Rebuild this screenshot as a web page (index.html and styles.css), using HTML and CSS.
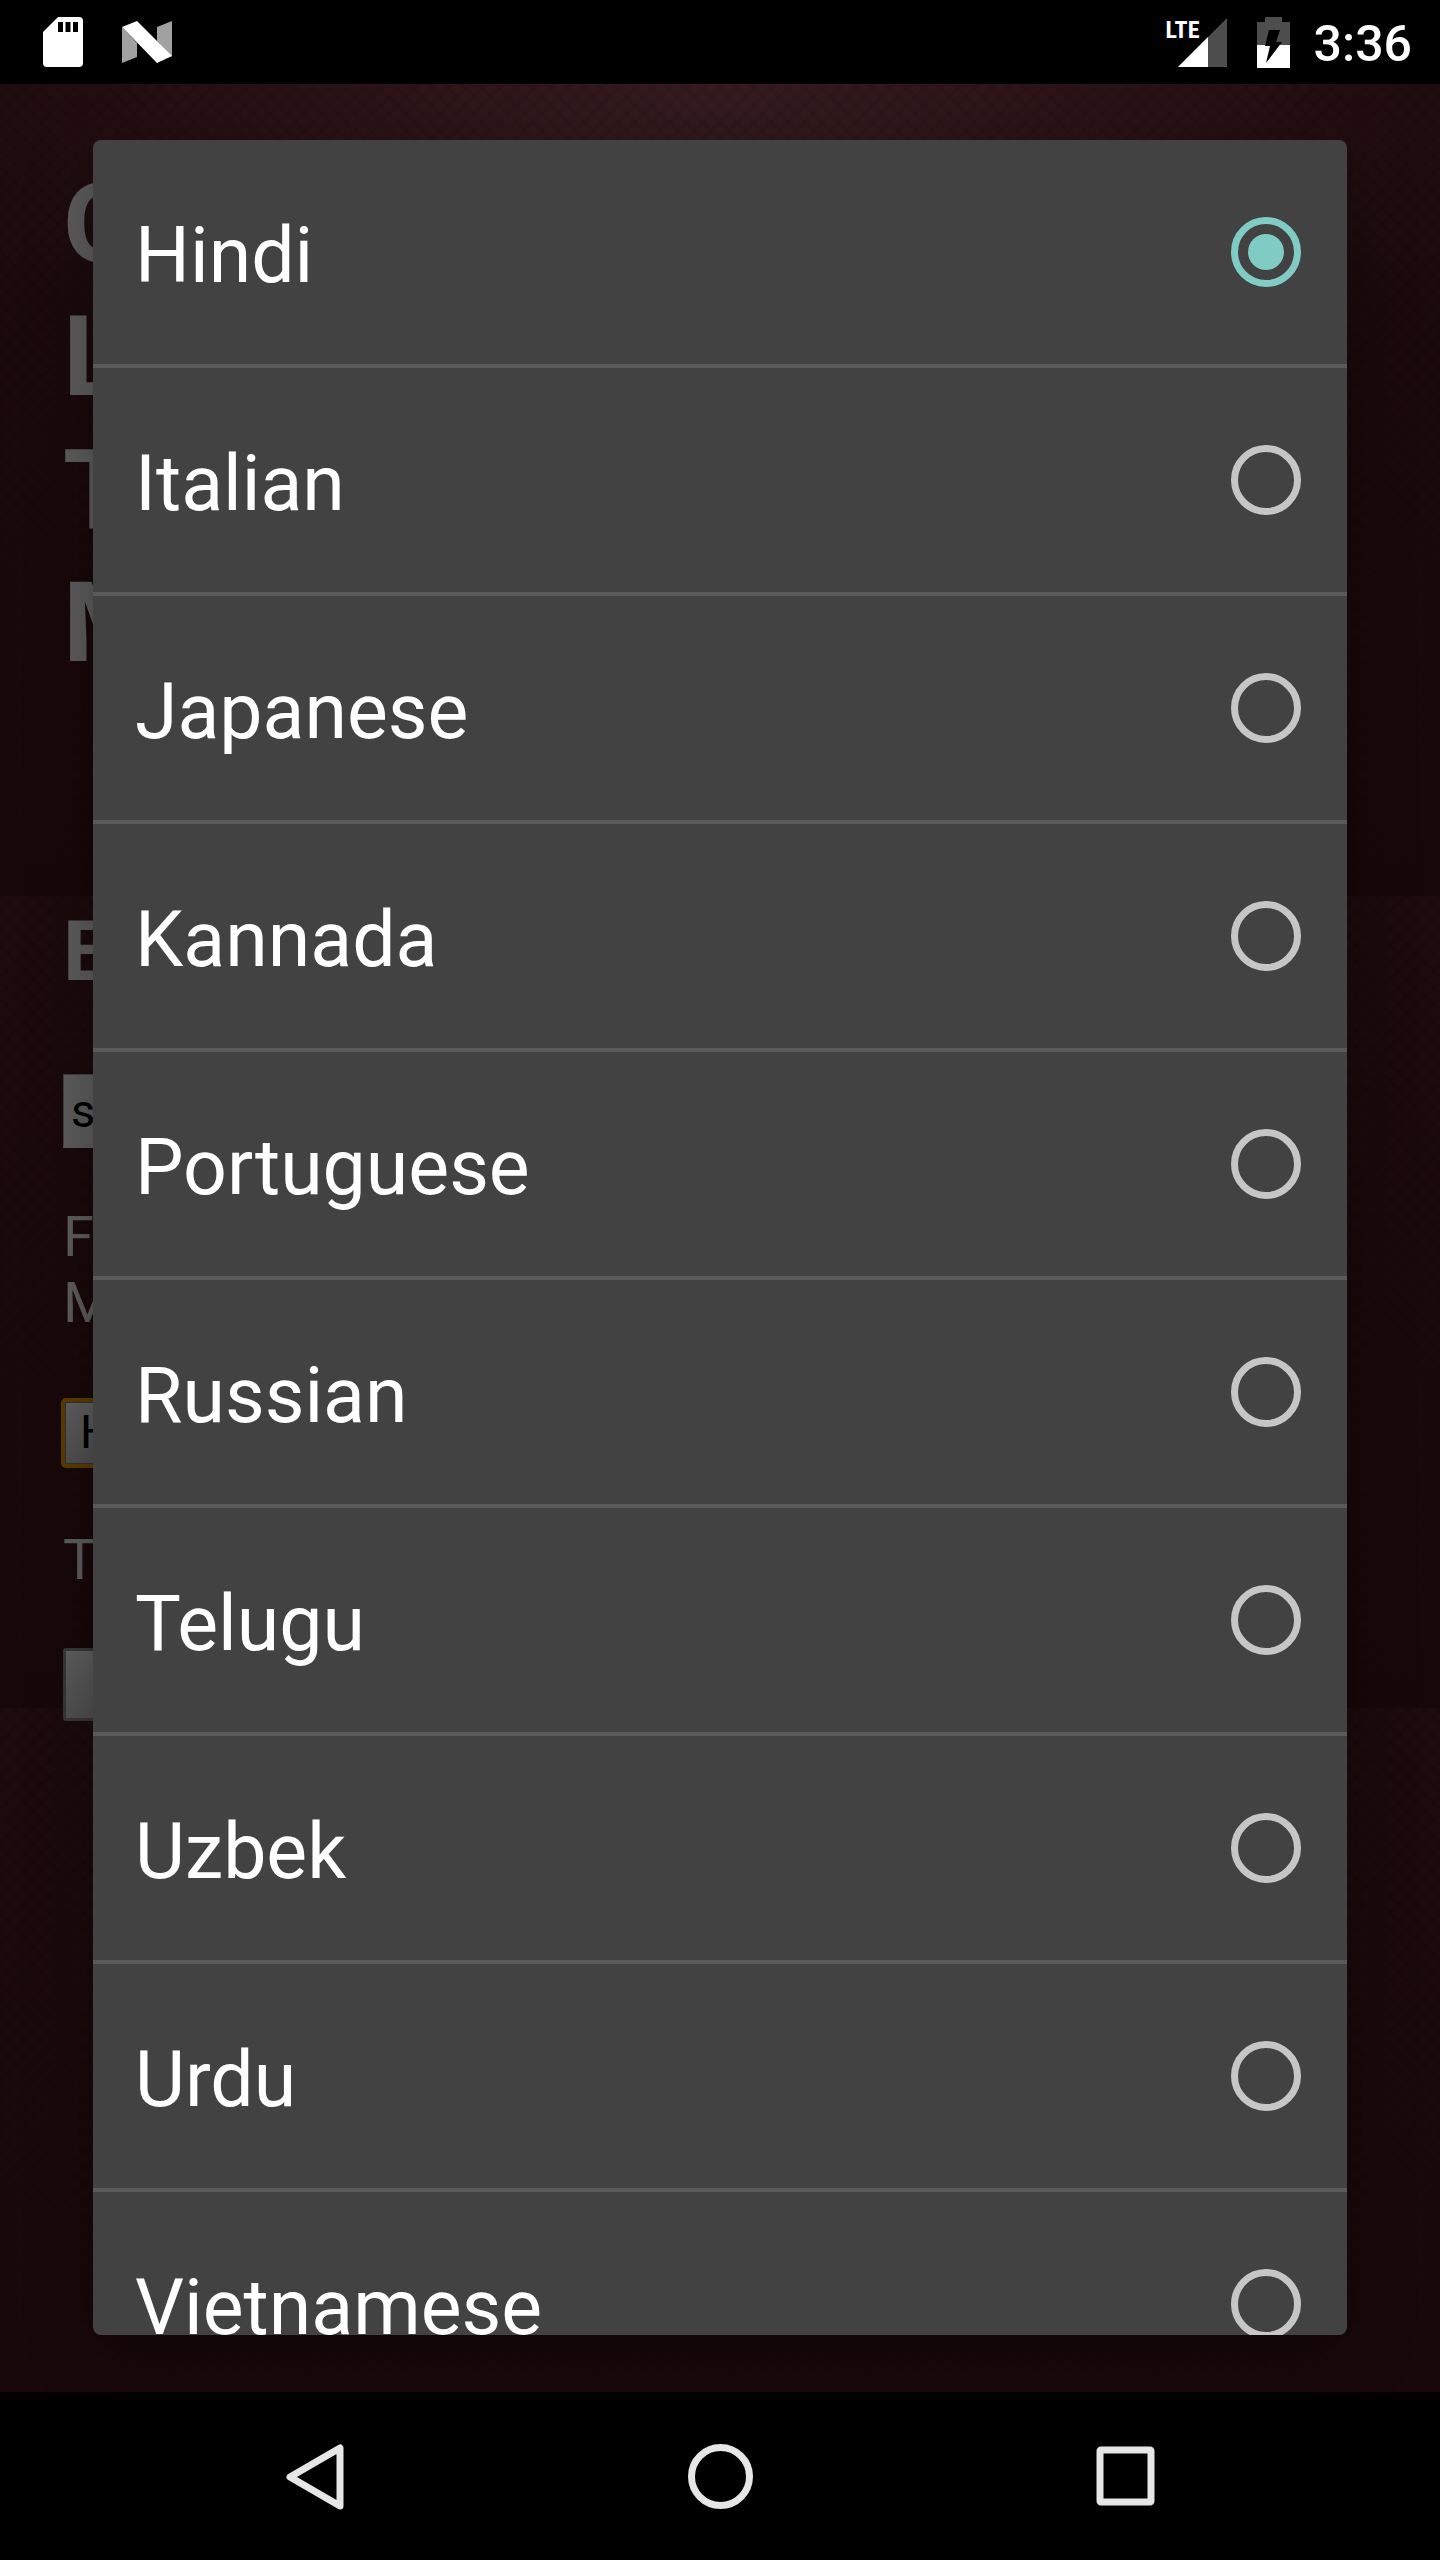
FILE: index.html
```html
<!DOCTYPE html>
<html lang="en">
<head>
<meta charset="utf-8">
<meta name="viewport" content="width=device-width, initial-scale=1">
<title>Choose a language</title>
<link rel="stylesheet" href="styles.css">
</head>
<body>
<header class="status">
  <div class="status-group">
    <svg class="icon-sd" viewBox="0 0 40 50" aria-hidden="true"><path fill="#fff" d="M15 0h21a4 4 0 0 1 4 4v42a4 4 0 0 1-4 4H4a4 4 0 0 1-4-4V15z"/><path d="M15 5h5v10h-5zM22.500 5h5v10h-5zM30 5h5v10h-5z"/></svg>
    <svg class="icon-n" viewBox="0 0 50 42" aria-hidden="true"><path fill="#a1a1a1" d="M0 6l15 16v14L0 42zM35 6L50 0v36L35 20z"/><path fill="#fff" d="M0 6L15 0l35 35-15 7z"/></svg>
  </div>
  <div class="status-group">
    <div class="signal">
      <svg class="icon-signal" viewBox="0 0 49 49" aria-hidden="true"><path fill="#4d4d4d" d="M49 0v49H0z"/><path fill="#fff" d="M30 19v30H0z"/></svg>
      <span class="lte">LTE</span>
    </div>
    <svg class="icon-battery" viewBox="0 0 33 51" aria-hidden="true"><path fill="#4d4d4d" d="M8 0h17v5h8v23H0V5h8z"/><path fill="#fff" d="M0 28h33v23H0z"/><path d="M12 13h11l-4 12h6L9 46l4-17H8z"/></svg>
    <time class="clock">3:36</time>
  </div>
</header>

<div class="stage">
  <main class="page">
    <h1 class="title">O<br>L<br>T<br>M</h1>
    <h2 class="subtitle">E</h2>
    <form class="form">
      <input class="field" type="text" value="s" aria-label="Text">
      <label class="caption" for="from">F<br>M</label>
      <select class="picker" id="from"><option>Hindi</option></select>
      <p class="caption caption-to">T</p>
      <button class="submit" type="button" aria-label="Submit"></button>
    </form>
  </main>

  <div class="overlay">
    <fieldset class="dialog" aria-label="Language">
      <label class="row"><span class="name">Hindi</span><input class="radio" type="radio" name="lang" checked></label>
      <label class="row"><span class="name">Italian</span><input class="radio" type="radio" name="lang"></label>
      <label class="row"><span class="name">Japanese</span><input class="radio" type="radio" name="lang"></label>
      <label class="row"><span class="name">Kannada</span><input class="radio" type="radio" name="lang"></label>
      <label class="row"><span class="name">Portuguese</span><input class="radio" type="radio" name="lang"></label>
      <label class="row"><span class="name">Russian</span><input class="radio" type="radio" name="lang"></label>
      <label class="row"><span class="name">Telugu</span><input class="radio" type="radio" name="lang"></label>
      <label class="row"><span class="name">Uzbek</span><input class="radio" type="radio" name="lang"></label>
      <label class="row"><span class="name">Urdu</span><input class="radio" type="radio" name="lang"></label>
      <label class="row"><span class="name">Vietnamese</span><input class="radio" type="radio" name="lang"></label>
    </fieldset>
  </div>
</div>

<nav class="navbar">
  <button class="nav-button" type="button" aria-label="Back"><svg class="nav-icon" viewBox="0 0 68 68" aria-hidden="true"><path d="M59 6v58L9 35z"/></svg></button>
  <button class="nav-button" type="button" aria-label="Home"><svg class="nav-icon" viewBox="0 0 68 68" aria-hidden="true"><circle cx="34.500" cy="34.500" r="29"/></svg></button>
  <button class="nav-button" type="button" aria-label="Recent apps"><svg class="nav-icon" viewBox="0 0 68 68" aria-hidden="true"><rect x="9" y="8" width="51" height="52" rx="1"/></svg></button>
</nav>
</body>
</html>
```
FILE: styles.css
```css
* {
  box-sizing: border-box;
}

body {
  margin: 0;
  height: 100vh;
  display: flex;
  flex-direction: column;
  overflow: hidden;
  background: #000;
  color: #fff;
  font-family: Roboto, "Liberation Sans", sans-serif;
}

/* Status bar */
.status {
  flex: none;
  height: 84px;
  padding: 0 28px 0 43px;
  display: flex;
  align-items: center;
  justify-content: space-between;
}

.status-group {
  display: flex;
  align-items: center;
}

.icon-sd {
  width: 40px;
  height: 50px;
  margin-right: 39px;
}

.icon-n {
  width: 50px;
  height: 42px;
}

.signal {
  position: relative;
  width: 61px;
  height: 49px;
  margin-right: 30px;
  display: flex;
  justify-content: flex-end;
}

.icon-signal {
  width: 49px;
  height: 49px;
}

.lte {
  position: absolute;
  left: 0;
  top: 0;
  font-family: "Roboto Condensed", "Open Sans Condensed", "Liberation Sans Narrow", Roboto, sans-serif;
  font-size: 24px;
  font-weight: 700;
  line-height: 24px;
}

.icon-battery {
  width: 33px;
  height: 51px;
  margin-right: 24px;
}

.clock {
  padding-top: 4px;
  font-size: 50px;
  font-weight: 500;
  line-height: 80px;
}

/* Web page behind the dialog */
.stage {
  position: relative;
  flex: 1;
  min-height: 0;
}

.page {
  height: 100%;
  padding: 73px 63px 0;
  overflow: hidden;
  color: #5e5e5e;
  background:
    repeating-linear-gradient(45deg, rgba(0, 0, 0, 0.06) 0 4px, transparent 4px 12px),
    repeating-linear-gradient(-45deg, rgba(0, 0, 0, 0.06) 0 4px, transparent 4px 12px),
    radial-gradient(ellipse 56% 400px at 50% 0, #361c20, #2a1316 50%, transparent 100%) no-repeat,
    linear-gradient(#1d0b0d, #180709) 0 0 / 100% 812px;
}

.title {
  margin: 0 0 214px;
  font-size: 112px;
  line-height: 133px;
}

.subtitle {
  margin: 0 0 73px;
  font-size: 84px;
  line-height: 98px;
}

.form {
  display: flex;
  flex-direction: column;
  align-items: flex-start;
}

.field {
  width: 60%;
  height: 74px;
  margin-bottom: 56px;
  padding: 0 7px;
  border: 1px solid #404040;
  border-bottom: 3px solid #5e5e5e;
  background: #5e5e5e;
  color: #000;
  font: 47px Roboto, sans-serif;
}

.caption {
  margin: 0 0 64px;
  font-size: 56px;
  line-height: 66px;
}

.caption-to {
  margin-bottom: 55px;
}

.picker {
  width: 60%;
  height: 66px;
  margin-bottom: 61px;
  padding: 0 14px 4px;
  appearance: none;
  border: 3px solid #333;
  border-radius: 3px;
  outline: 4px solid #5c3d00;
  outline-offset: -2px;
  background: linear-gradient(#606060, #505050);
  color: #000;
  font: 47px Roboto, sans-serif;
}

.submit {
  width: 60%;
  height: 73px;
  border: 3px solid #383838;
  border-radius: 3px;
  background: linear-gradient(#606060, #505050);
}

/* Language dialog */
.overlay {
  position: absolute;
  inset: 0;
  padding: 56px 93px 57px;
}

.dialog {
  height: 100%;
  min-width: 0;
  margin: 0;
  padding: 0;
  border: 0;
  border-radius: 8px;
  overflow: hidden;
  background: #424242;
  box-shadow: 0 16px 64px rgba(0, 0, 0, 0.35);
}

.row {
  height: 228px;
  padding: 0 46px 0 42px;
  display: flex;
  align-items: center;
  justify-content: space-between;
  border-bottom: 4px solid #5a5a5a;
}

.name {
  padding-top: 8px;
  font-size: 77px;
  line-height: 90px;
}

.radio {
  appearance: none;
  width: 70px;
  height: 70px;
  margin: 0;
  padding: 10px;
  border: 7px solid #c6c6c6;
  border-radius: 50%;
}

.radio:checked {
  border-color: #80cbc4;
  background: #80cbc4 content-box;
}

/* Navigation bar */
.navbar {
  flex: none;
  height: 168px;
  padding: 0 112px;
  display: grid;
  grid-template-columns: repeat(3, 1fr);
}

.nav-button {
  padding: 0;
  border: 0;
  background: none;
}

.nav-icon {
  display: block;
  width: 68px;
  height: 68px;
  margin: 0 auto;
  fill: none;
  stroke: #e6e6e6;
  stroke-width: 7;
  stroke-linejoin: round;
}
```
